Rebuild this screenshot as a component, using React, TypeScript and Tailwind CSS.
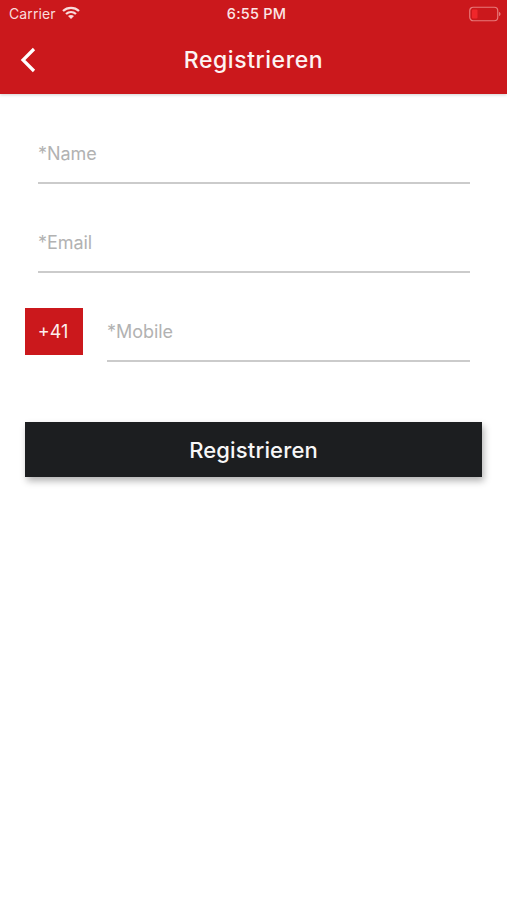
function WifiIcon() {
    return (
        <svg width="18" height="13" viewBox="0 0 18 13" fill="none" className="mt-[-2px] ml-[6px]">
            <path d="M1 5C5.6 0.8 12.4 0.8 17 5" stroke="#f9dcdc" strokeWidth="2.3" />
            <path d="M4 8C6.9 5.4 11.1 5.4 14 8" stroke="#f9dcdc" strokeWidth="2.3" />
            <path d="M6 10L9 13L12 10C10.2 8.6 7.8 8.6 6 10Z" fill="#f9dcdc" />
        </svg>
    );
}

function BatteryIcon() {
    return (
        <svg width="32" height="16" viewBox="0 0 32 16" fill="none">
            <rect x="0.75" y="1.25" width="28" height="13.5" rx="3.5" stroke="#e87a7a" strokeWidth="1.2" />
            <rect x="3" y="3.5" width="5.5" height="9" rx="1" fill="#f0262a" />
            <path d="M30 6V10C31 9.6 31.5 8.9 31.5 8C31.5 7.1 31 6.4 30 6Z" fill="#e87a7a" />
        </svg>
    );
}

function Field({ label, className }: { label: string; className?: string }) {
    return (
        <div className={`flex h-[45px] items-center border-b-2 border-[#cbcbcb] pb-[14px] ${className ?? ''}`}>
            <span className="text-[18px] leading-none tracking-[-0.05px] text-[#b2b2b2]">{label}</span>
        </div>
    );
}

export default function App() {
    return (
        <div className="min-h-[900px] bg-white font-['Inter',sans-serif]">
            <header className="h-[94px] bg-[#cb181c] shadow-[0_1px_3px_rgba(0,0,0,0.18)]">
                <div className="flex h-[27px] items-center justify-between pl-[9px] pr-[6px]">
                    <div className="flex w-[150px] items-center">
                        <span className="text-[14px] tracking-[0.1px] text-[#f9dcdc]">Carrier</span>
                        <WifiIcon />
                    </div>
                    <span className="ml-[3px] text-[14.5px] font-medium tracking-[0.2px] text-[#fbe6e6]">6:55 PM</span>
                    <div className="flex w-[150px] justify-end">
                        <BatteryIcon />
                    </div>
                </div>
                <div className="relative flex h-[63px] items-center justify-center pt-[3px]">
                    <svg width="16" height="26" viewBox="0 0 16 26" fill="none" className="absolute left-[20px] top-[20px]">
                        <path d="M14 2L3 13L14 24" stroke="#ffffff" strokeWidth="3.2" />
                    </svg>
                    <h1 className="text-[23px] font-medium tracking-[0.55px] text-[#fdf3f3]">Registrieren</h1>
                </div>
            </header>
            <main className="flex flex-col px-[25px]">
                <div className="mt-[45px] flex flex-col gap-[44px] pl-[13px] pr-[12px]">
                    <Field label="*Name" />
                    <Field label="*Email" />
                </div>
                <div className="mt-[35px] flex items-start">
                    <div className="flex h-[47px] w-[58px] items-center justify-center bg-[#cb181c] pr-[2px] text-[18px] text-[#fdeeee]">
                        +41
                    </div>
                    <Field label="*Mobile" className="ml-[24px] mt-[9px] flex-1 mr-[12px]" />
                </div>
                <button
                    type="button"
                    className="mt-[60px] h-[55px] bg-[#1c1e20] pt-[1px] text-[22px] font-medium tracking-[0.15px] text-[#f7f7f7] shadow-[2px_4px_7px_rgba(0,0,0,0.3)]"
                >
                    Registrieren
                </button>
            </main>
        </div>
    );
}
